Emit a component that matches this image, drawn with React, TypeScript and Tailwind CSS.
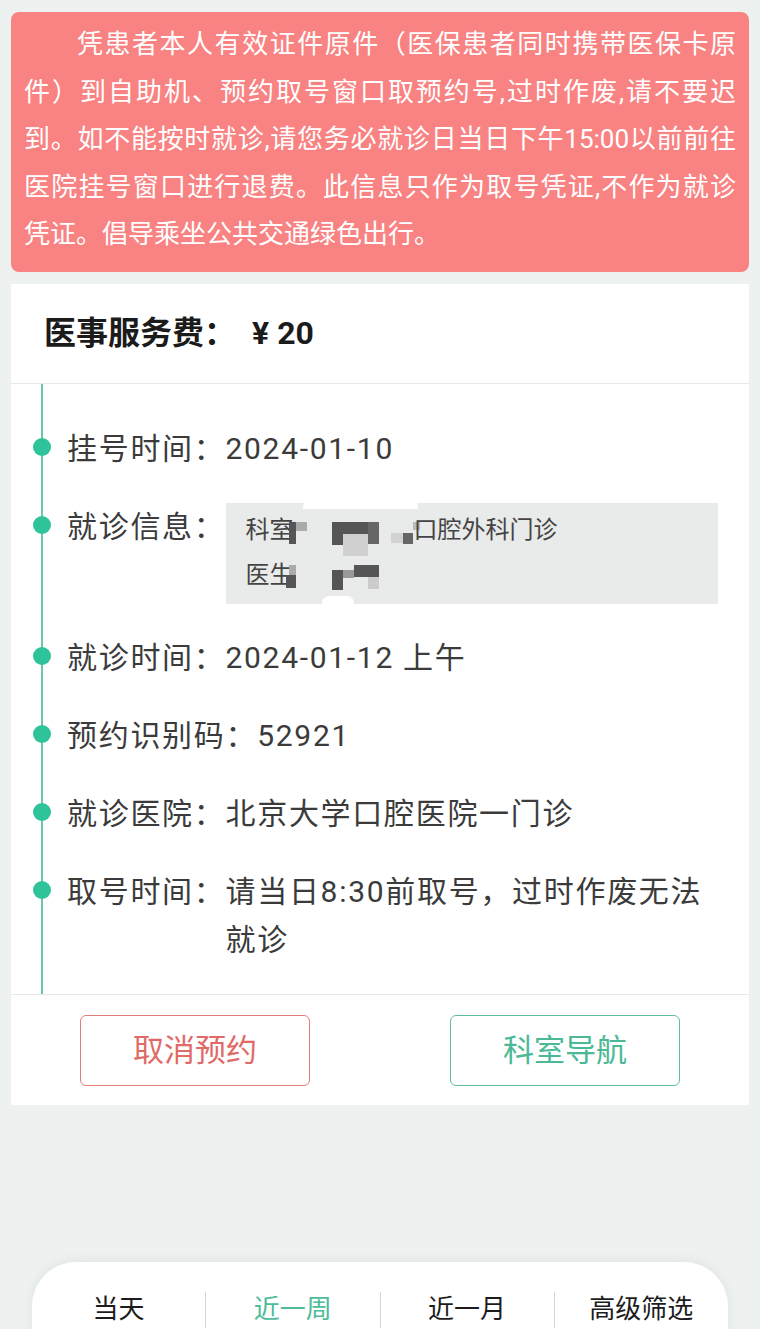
const tabs = ['当天', '近一周', '近一月', '高级筛选'];

const Row = ({ label, children }: { label: string; children: React.ReactNode }) => (
  <div className="relative flex">
    <span className="absolute -left-[34px] top-[13px] h-[18px] w-[18px] rounded-full bg-[#2fc39c]" />
    <span className="shrink-0">{label}</span>
    <div className="flex-1">{children}</div>
  </div>
);

export default function App() {
  return (
    <div className="h-[1329px] w-full overflow-hidden bg-[#edf2f1] px-[11px] pt-[12px] font-[Roboto,'Noto_Sans_CJK_SC',sans-serif]">
      {/* Notice */}
      <div className="rounded-[8px] bg-[#f98282] px-[13px] pt-[9px] pb-[13px] text-[26px] leading-[47.5px] text-white">
        <div className="whitespace-nowrap indent-[53px] [text-align-last:justify]">
          凭患者本人有效证件原件（医保患者同时携带医保卡原
        </div>
        <div className="whitespace-nowrap [text-align-last:justify]">
          件）到自助机、预约取号窗口取预约号,过时作废,请不要迟
        </div>
        <div className="whitespace-nowrap [text-align-last:justify]">
          到。如不能按时就诊,请您务必就诊日当日下午15:00以前前往
        </div>
        <div className="whitespace-nowrap [text-align-last:justify]">
          医院挂号窗口进行退费。此信息只作为取号凭证,不作为就诊
        </div>
        <div className="whitespace-nowrap">凭证。倡导乘坐公共交通绿色出行。</div>
      </div>

      {/* Detail card */}
      <div className="mt-[12px] bg-white">
        <div className="flex h-[100px] items-center border-b border-[#e6e8e8] pl-[33px] text-[32px] font-bold text-[#1b1b1b]">
          医事服务费：<span className="ml-[16px]">¥ 20</span>
        </div>

        <div className="ml-[30px] flex flex-col gap-[30px] border-l-2 border-[#6cc6a8] pt-[41px] pr-[31px] pb-[30px] pl-[24px] text-[30px] leading-[48px] tracking-[1.7px] text-[#3b3b3b]">
          <Row label="挂号时间：">2024-01-10</Row>
          <Row label="就诊信息：">
            <div className="relative h-[101px] bg-[#e9eaea] px-[20px] py-[5px] text-[24px] leading-[45px] tracking-normal text-[#444]">
              <div className="flex h-[45px] items-start">
                <span>科室</span>
                <svg width="131" height="34" className="mt-[14px] -ml-[5px] shrink-0">
                  <rect x="0" y="0" width="7" height="22" fill="#555" />
                  <rect x="7" y="0" width="11" height="9" fill="#aaa" />
                  <rect x="43" y="0" width="36" height="12" fill="#555" />
                  <rect x="43" y="12" width="11" height="11" fill="#555" />
                  <rect x="54" y="12" width="25" height="22" fill="#d0d0d0" />
                  <rect x="79" y="0" width="11" height="22" fill="#666" />
                  <rect x="102" y="11" width="12" height="10" fill="#d2d2d2" />
                  <rect x="114" y="11" width="10" height="11" fill="#666" />
                  <rect x="124" y="0" width="7" height="8" fill="#bbb" />
                </svg>
                <span className="-ml-[6px]">口腔外科门诊</span>
              </div>
              <div className="flex h-[45px] items-start">
                <span>医生</span>
                <svg width="96" height="25" className="mt-[12px] -ml-[11px] shrink-0">
                  <rect x="6" y="0" width="7" height="10" fill="#aaa" />
                  <rect x="3" y="10" width="10" height="13" fill="#555" />
                  <rect x="49" y="5" width="11" height="20" fill="#555" />
                  <rect x="60" y="5" width="11" height="8" fill="#999" />
                  <rect x="71" y="0" width="25" height="12" fill="#555" />
                  <rect x="85" y="12" width="11" height="12" fill="#ccc" />
                </svg>
              </div>
              {/* smudges left by the blur */}
              <span className="absolute top-[-6px] left-[77px] h-[12px] w-[115px] rounded-t-[10px] bg-white" />
              <span className="absolute bottom-[-6px] left-[96px] h-[14px] w-[32px] rounded-full bg-white" />
            </div>
          </Row>
          <Row label="就诊时间：">2024-01-12 上午</Row>
          <Row label="预约识别码：">52921</Row>
          <Row label="就诊医院：">北京大学口腔医院一门诊</Row>
          <Row label="取号时间：">请当日8:30前取号，过时作废无法就诊</Row>
        </div>

        <div className="flex justify-between border-t border-[#e6e8e8] px-[69px] pt-[20px] pb-[19px] text-[31px]">
          <button className="flex h-[71px] w-[230px] items-center justify-center rounded-[6px] border-[1.5px] border-[#e37c7a] pt-[3px] text-[#e06a68]">
            取消预约
          </button>
          <button className="flex h-[71px] w-[230px] items-center justify-center rounded-[6px] border-[1.5px] border-[#5dbf9f] pt-[3px] text-[#4bb995]">
            科室导航
          </button>
        </div>
      </div>

      {/* Filter bar */}
      <div className="mx-[21px] mt-[157px] flex h-[100px] rounded-t-[44px] bg-white pt-[30px] shadow-[0_-2px_12px_rgba(0,0,0,0.06)]">
        {tabs.map((tab, i) => (
          <div
            key={tab}
            className={`flex h-[36px] flex-1 items-center justify-center text-[26px] ${
              i > 0 ? 'border-l border-[#d6d6d6]' : ''
            } ${i === 1 ? 'text-[#4dbb98]' : 'text-[#1c1c1c]'}`}
          >
            {tab}
          </div>
        ))}
      </div>
    </div>
  );
}
